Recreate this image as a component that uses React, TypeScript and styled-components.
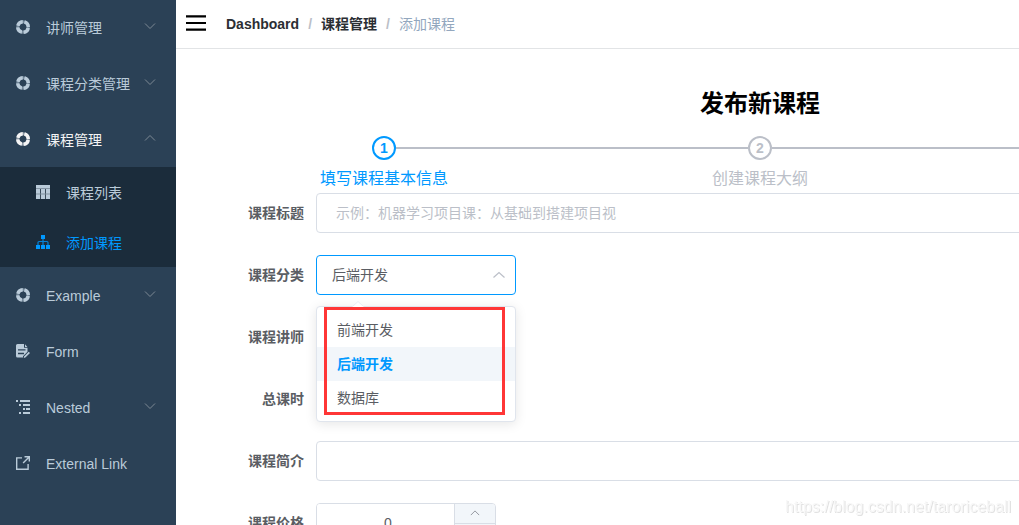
import React, { useState } from "react";
import styled, { createGlobalStyle } from "styled-components";

const accent = "#0099ff";
const line = "#d9dee6";
const grey = "#bbbfc8";

const GlobalStyle = createGlobalStyle`
  *, *::before, *::after { box-sizing: border-box; }
  html, body, #root { height: 100%; }
  body {
    margin: 0;
    overflow: hidden;
    background: #fff;
    color: #000;
    font-family: "Liberation Sans", "Noto Sans CJK SC", sans-serif;
    font-size: 14px;
  }
  button, input, select { font: inherit; color: inherit; margin: 0; }
`;

const Layout = styled.div`
  display: flex;
  height: 100%;
  overflow: hidden;
`;

const Sidebar = styled.nav`
  flex: 0 0 176px;
  background: #2b4156;
  overflow: hidden;
`;

const Menu = styled.ul`
  list-style: none;
  margin: -1px 0 0;
  padding: 0;
`;

const SubMenu = styled.ul`
  list-style: none;
  margin: 0;
  padding: 0;
  background: #1b2c3b;
`;

const MenuLink = styled.a<{ $nested?: boolean; $tone?: string }>`
  display: flex;
  align-items: center;
  gap: 16px;
  height: ${(p) => (p.$nested ? 50 : 56)}px;
  padding: 0 20px 0 ${(p) => (p.$nested ? 36 : 16)}px;
  color: ${(p) => p.$tone ?? "#bacbd9"};
  text-decoration: none;
  white-space: nowrap;
`;

const MenuText = styled.span`
  flex: 1 1 0;
  min-width: 0;
  line-height: 20px;
  padding-top: 2px;
`;

const MenuChevron = styled.svg`
  flex: none;
  width: 12px;
  height: 12px;
  margin-left: -16px;
  margin-bottom: 3px;
  fill: none;
  stroke: #7d8994;
`;

const Icon = styled.svg`
  flex: none;
  width: 14px;
  height: 14px;
  fill: currentColor;
`;

const Main = styled.div`
  flex: 1 0 1168px;
  min-width: 0;
`;

const Navbar = styled.header`
  display: flex;
  align-items: center;
  gap: 20px;
  height: 49px;
  padding: 0 10px;
  border-bottom: 1px solid #e2e4e6;
`;

const Hamburger = styled.button`
  display: flex;
  border: 0;
  padding: 0;
  margin-bottom: 2px;
  background: none;
`;

const Crumbs = styled.ol`
  display: flex;
  gap: 9px;
  list-style: none;
  margin: 0;
  padding: 0;
  line-height: 20px;
`;

const CrumbLink = styled.a`
  color: #2b2e33;
  font-weight: 700;
  text-decoration: none;
`;

const Slash = styled.li`
  color: ${grey};
  font-weight: 700;
`;

const CurrentCrumb = styled.li`
  color: #93a7be;
`;

const Content = styled.main`
  padding: 36px 20px 20px;
`;

const Title = styled.h2`
  margin: 0 0 13px;
  font-size: 24px;
  line-height: 38px;
  text-align: center;
`;

const Steps = styled.ol`
  display: flex;
  list-style: none;
  margin: 0;
  padding: 0;
`;

const Step = styled.li<{ $active?: boolean }>`
  flex: 1;
  color: ${(p) => (p.$active ? accent : grey)};
  text-align: center;
`;

const StepHead = styled.div`
  display: flex;
  align-items: center;
`;

const StepLine = styled.span<{ $hidden?: boolean }>`
  flex: 1;
  height: 2px;
  background: ${(p) => (p.$hidden ? "transparent" : grey)};
`;

const StepCircle = styled.span`
  width: 24px;
  height: 24px;
  border: 2px solid currentColor;
  border-radius: 50%;
  font-weight: 700;
  line-height: 20px;
`;

const StepTitle = styled.div`
  padding-top: 5px;
  font-size: 16px;
  line-height: 28px;
`;

const Form = styled.form`
  display: flex;
  flex-direction: column;
  gap: 22px;
`;

const Row = styled.div`
  display: flex;
  height: 40px;
`;

const Label = styled.label`
  flex: 0 0 120px;
  padding-right: 12px;
  color: #5a5d63;
  font-weight: 700;
  line-height: 40px;
  text-align: right;
`;

const TextInput = styled.input`
  flex: 1;
  min-width: 0;
  height: 40px;
  padding: 0 15px;
  border: 1px solid ${line};
  border-radius: 4px;
  background: #fff;
  color: #5a5d63;
  outline: none;
  &::placeholder { color: ${grey}; opacity: 1; }
`;

const SelectBox = styled.div`
  position: relative;
  width: 200px;
`;

const Select = styled.select<{ $open?: boolean }>`
  appearance: none;
  width: 100%;
  height: 40px;
  padding: 0 30px 0 15px;
  border: 1px solid ${(p) => (p.$open ? accent : line)};
  border-radius: 4px;
  background: #fff;
  color: #5a5d63;
  outline: none;
`;

const SelectArrow = styled.svg`
  position: absolute;
  top: 13px;
  right: 10px;
  width: 14px;
  height: 14px;
  fill: none;
  stroke: ${grey};
  stroke-width: 1.2;
  pointer-events: none;
`;

const Popper = styled.div`
  position: absolute;
  z-index: 2;
  top: 51px;
  left: 0;
  width: 100%;
  border: 1px solid #e0e5ed;
  border-radius: 4px;
  background: #fff;
  box-shadow: 0 2px 12px rgba(0, 0, 0, 0.1);
`;

const PopperArrow = styled.svg`
  position: absolute;
  top: -6px;
  left: 35px;
  width: 12px;
  height: 7px;
`;

const OptionList = styled.ul`
  list-style: none;
  margin: 0;
  padding: 6px 0;
`;

const OptionItem = styled.li<{ $selected?: boolean }>`
  padding: 0 20px;
  line-height: 34px;
  color: ${(p) => (p.$selected ? accent : "#5a5d63")};
  background: ${(p) => (p.$selected ? "#f2f6fa" : "transparent")};
  font-weight: ${(p) => (p.$selected ? 700 : 400)};
`;

const Highlight = styled.div`
  position: absolute;
  inset: 0 10px 6px 7px;
  border: 3px solid #ff3636;
  pointer-events: none;
`;

const NumberBox = styled.div`
  display: flex;
  width: 180px;
  height: 40px;
  border: 1px solid ${line};
  border-radius: 4px;
  overflow: hidden;
`;

const NumberInput = styled.input`
  flex: 1;
  min-width: 0;
  padding: 0 10px 0 15px;
  border: 0;
  color: #5a5d63;
  text-align: center;
  outline: none;
  appearance: textfield;
  &::-webkit-inner-spin-button { appearance: none; margin: 0; }
`;

const Stepper = styled.div`
  display: flex;
  flex-direction: column;
  width: 41px;
  border-left: 1px solid ${line};
`;

const StepperButton = styled.button`
  display: flex;
  flex: 1;
  align-items: center;
  justify-content: center;
  padding: 0;
  border: 0;
  background: #f2f6fa;
  & + & { border-top: 1px solid ${line}; }
`;

const SmallChevron = styled.svg`
  width: 10px;
  height: 10px;
  fill: none;
  stroke: #82868e;
`;

const Watermark = styled.div`
  position: fixed;
  right: 8px;
  bottom: 8px;
  color: #f8f8f8;
  font-size: 16px;
  line-height: 20px;
  text-shadow: 1px 1px 0 #e2e2e2;
  pointer-events: none;
`;

const UP = "M1 8.5 6 3.5 11 8.5";
const DOWN = "M1 3.5 6 8.5 11 3.5";

const HelpIcon = () => (
  <Icon viewBox="0 0 14 14">
    <circle cx="7" cy="7" r="5.3" fill="none" stroke="currentColor" strokeOpacity="0.5" strokeWidth="3" />
    <circle
      cx="7"
      cy="7"
      r="5.3"
      fill="none"
      stroke="currentColor"
      strokeWidth="3.4"
      strokeDasharray="6.525 1.8"
      strokeDashoffset="-0.9"
    />
  </Icon>
);

const TableIcon = () => (
  <Icon viewBox="0 0 14 14">
    <path opacity="0.55" d="M0 3H14V4H0ZM0 8.6H14V9.4H0Z" />
    <path d="M0 0H14V3.2H0ZM0 4H4.2V8.8H0ZM5 4H9V8.8H5ZM9.8 4H14V8.8H9.8ZM0 9.3H4.2V14H0ZM5 9.3H9V14H5ZM9.8 9.3H14V14H9.8Z" />
  </Icon>
);

const TreeIcon = () => (
  <Icon viewBox="0 0 14 14">
    <path d="M5 0H9V4H5ZM0 10H4V14H0ZM5 10H9V14H5ZM10 10H14V14H10Z" />
    <path
      d="M7 4V10M2 10V7.5Q2 6.5 3 6.5H11Q12 6.5 12 7.5V10"
      fill="none"
      stroke="currentColor"
      strokeWidth="1.2"
      strokeOpacity="0.8"
    />
  </Icon>
);

const FormIcon = () => (
  <Icon viewBox="0 0 14 14">
    <path
      fillRule="evenodd"
      d="M1.5 0H8V3.8H11.5V7.8L7 12.2V13.5H1.5Q0 13.5 0 12V1.5Q0 0 1.5 0ZM2 5.2V6.4H9.5V5.2ZM2 8.8V10.2H8V8.8Z"
    />
    <path d="M9 0.3 11.4 3H9ZM8 12.4 12.7 7.8 14 9 9.4 13.6 7.8 13.9Z" />
  </Icon>
);

const NestedIcon = () => (
  <Icon viewBox="0 0 14 14">
    <path d="M0 0H2V2H0ZM4 0H14V2H4ZM3 4H5V6H3ZM7 4H14V6H7ZM7 8H9V10H7ZM10 8H14V10H10ZM3 12H5V14H3ZM7 12H14V14H7Z" />
  </Icon>
);

const LinkIcon = () => (
  <Icon viewBox="0 0 14 14">
    <path d="M6 1.2V2.6H1.4V12.6H11.4V8H12.8V14H0V1.2ZM8.5 0H14V5.5H12.6V2.4L7.6 7.4 6.6 6.4 11.6 1.4H8.5Z" />
  </Icon>
);

type Entry = { text: string; icon: React.ReactNode; arrow?: "up" | "down"; tone?: string; children?: Entry[] };

const entries: Entry[] = [
  { text: "讲师管理", icon: <HelpIcon />, arrow: "down" },
  { text: "课程分类管理", icon: <HelpIcon />, arrow: "down" },
  {
    text: "课程管理",
    icon: <HelpIcon />,
    arrow: "up",
    tone: "#f4f4f5",
    children: [
      { text: "课程列表", icon: <TableIcon /> },
      { text: "添加课程", icon: <TreeIcon />, tone: accent },
    ],
  },
  { text: "Example", icon: <HelpIcon />, arrow: "down" },
  { text: "Form", icon: <FormIcon /> },
  { text: "Nested", icon: <NestedIcon />, arrow: "down" },
  { text: "External Link", icon: <LinkIcon /> },
];

const MenuEntry = ({ entry, nested }: { entry: Entry; nested?: boolean }) => (
  <li>
    <MenuLink href="#" $nested={nested} $tone={entry.tone}>
      {entry.icon}
      <MenuText>{entry.text}</MenuText>
      {entry.arrow && (
        <MenuChevron viewBox="0 0 12 12">
          <path d={entry.arrow === "up" ? UP : DOWN} />
        </MenuChevron>
      )}
    </MenuLink>
    {entry.children && (
      <SubMenu>
        {entry.children.map((child) => (
          <MenuEntry key={child.text} entry={child} nested />
        ))}
      </SubMenu>
    )}
  </li>
);

const NumberField = ({ id }: { id: string }) => {
  const [value, setValue] = useState(0);
  return (
    <NumberBox>
      <NumberInput id={id} type="number" value={value} onChange={(e) => setValue(Number(e.target.value))} />
      <Stepper>
        <StepperButton type="button" aria-label="+" onClick={() => setValue(value + 1)}>
          <SmallChevron viewBox="0 0 12 12"><path d={UP} /></SmallChevron>
        </StepperButton>
        <StepperButton type="button" aria-label="-" onClick={() => setValue(Math.max(0, value - 1))}>
          <SmallChevron viewBox="0 0 12 12"><path d={DOWN} /></SmallChevron>
        </StepperButton>
      </Stepper>
    </NumberBox>
  );
};

const categories = ["前端开发", "后端开发", "数据库"];
const steps = ["填写课程基本信息", "创建课程大纲", "最终发布"];

export default function App() {
  const [category, setCategory] = useState("后端开发");
  return (
    <>
      <GlobalStyle />
      <Layout>
        <Sidebar>
          <Menu>
            {entries.map((entry) => (
              <MenuEntry key={entry.text} entry={entry} />
            ))}
          </Menu>
        </Sidebar>
        <Main>
          <Navbar>
            <Hamburger type="button" aria-label="menu">
              <svg width="20" height="16" viewBox="0 0 20 16">
                <path d="M0 0.2H20V2.4H0ZM0 6.9H20V9.1H0ZM0 13.6H20V15.8H0Z" />
              </svg>
            </Hamburger>
            <Crumbs>
              <li><CrumbLink href="#">Dashboard</CrumbLink></li>
              <Slash>/</Slash>
              <li><CrumbLink href="#">课程管理</CrumbLink></li>
              <Slash>/</Slash>
              <CurrentCrumb>添加课程</CurrentCrumb>
            </Crumbs>
          </Navbar>
          <Content>
            <Title>发布新课程</Title>
            <Steps>
              {steps.map((step, i) => (
                <Step key={step} $active={i === 0}>
                  <StepHead>
                    <StepLine $hidden={i === 0} />
                    <StepCircle>{i + 1}</StepCircle>
                    <StepLine $hidden={i === steps.length - 1} />
                  </StepHead>
                  <StepTitle>{step}</StepTitle>
                </Step>
              ))}
            </Steps>
            <Form>
              <Row>
                <Label htmlFor="title">课程标题</Label>
                <TextInput id="title" placeholder=" 示例：机器学习项目课：从基础到搭建项目视" />
              </Row>
              <Row>
                <Label htmlFor="category">课程分类</Label>
                <SelectBox>
                  <Select id="category" $open value={category} onChange={(e) => setCategory(e.target.value)}>
                    {categories.map((name) => (
                      <option key={name}>{name}</option>
                    ))}
                  </Select>
                  <SelectArrow viewBox="0 0 14 14"><path d="M1.5 9.5 7 4.5 12.5 9.5" /></SelectArrow>
                  <Popper>
                    <PopperArrow viewBox="0 0 12 7">
                      <path d="M0 6 6 0.5 12 6V7H0Z" fill="#fff" />
                      <path d="M0 6 6 0.5 12 6" fill="none" stroke="#e9edf4" />
                    </PopperArrow>
                    <OptionList role="listbox">
                      {categories.map((name) => (
                        <OptionItem
                          key={name}
                          role="option"
                          aria-selected={name === category}
                          $selected={name === category}
                          onClick={() => setCategory(name)}
                        >
                          {name}
                        </OptionItem>
                      ))}
                    </OptionList>
                    <Highlight />
                  </Popper>
                </SelectBox>
              </Row>
              <Row>
                <Label htmlFor="teacher">课程讲师</Label>
                <SelectBox>
                  <Select id="teacher" />
                </SelectBox>
              </Row>
              <Row>
                <Label htmlFor="hours">总课时</Label>
                <NumberField id="hours" />
              </Row>
              <Row>
                <Label htmlFor="intro">课程简介</Label>
                <TextInput id="intro" />
              </Row>
              <Row>
                <Label htmlFor="price">课程价格</Label>
                <NumberField id="price" />
              </Row>
            </Form>
          </Content>
        </Main>
      </Layout>
      <Watermark>https://blog.csdn.net/taroriceball</Watermark>
    </>
  );
}
